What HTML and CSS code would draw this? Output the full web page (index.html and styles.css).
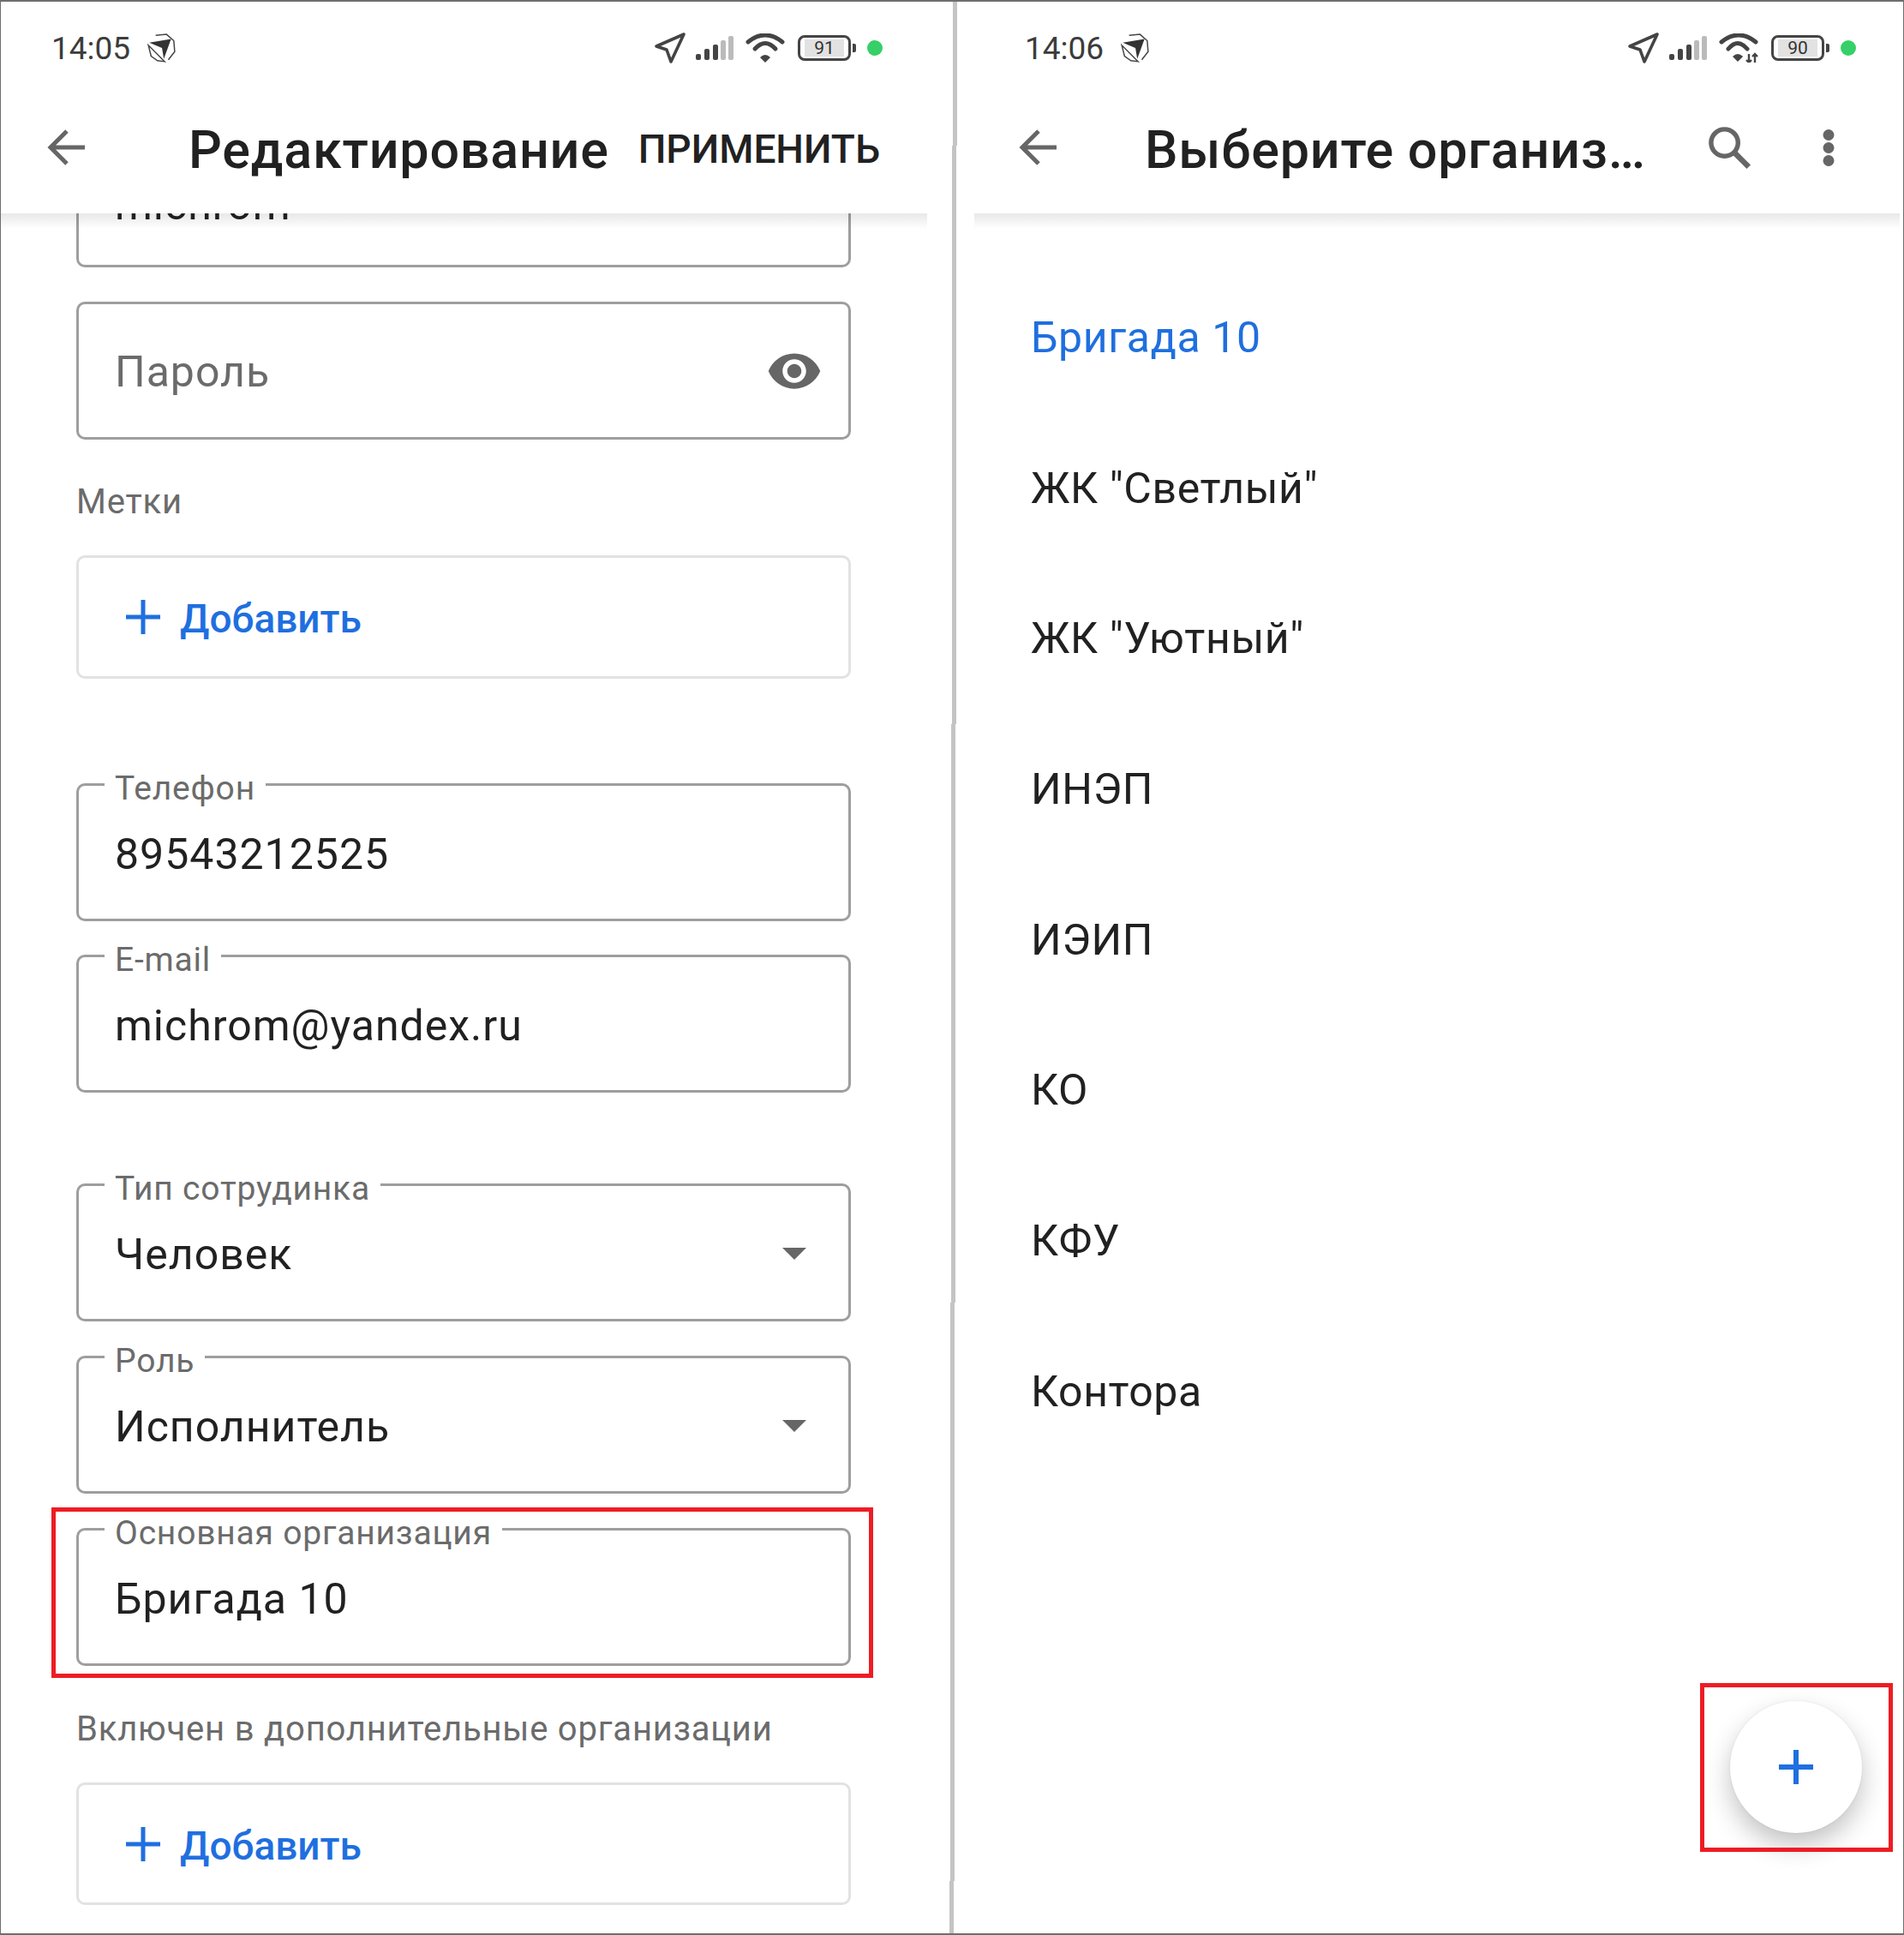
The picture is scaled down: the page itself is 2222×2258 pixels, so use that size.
FILE: index.html
```html
<!DOCTYPE html>
<html lang="en">
<head>
<title>Редактирование</title>
<meta charset="UTF-8">
<link rel="stylesheet" href="styles.css">
</head>
<body>

<div class="frame">

  <!-- Left phone: edit form -->
  <div class="phone phone-left">
    <div class="topbar">
      <div class="status">
        <span class="time">14:05</span>
        <svg class="logo" viewBox="0 0 34 34"><path d="M11 3 L23 2 L31 9 L32 21 L25 30 M21 32 L13 31 L6 26 L3 14 Z" fill="none" stroke="#444" stroke-width="1.4"/><path d="M4 11 L28 7 L20 29 L18 17 Z" fill="#333"/></svg>
        <span class="status-right">
          <svg class="ic-nav" viewBox="0 0 38 38"><path d="M35 3 L3 17 L15 21 L20 35 Z" fill="none" stroke="#444" stroke-width="3.6" stroke-linejoin="round"/></svg>
          <svg class="ic-signal" viewBox="0 0 46 30"><rect x="1" y="22" width="6" height="7" rx="2" fill="#444"/><rect x="11" y="16" width="6" height="13" rx="2" fill="#444"/><rect x="21" y="11" width="6" height="18" rx="2" fill="#444"/><rect x="30" y="6" width="6" height="23" rx="2" fill="#bbb"/><rect x="39" y="1" width="6" height="28" rx="2" fill="#bbb"/></svg>
          <svg class="ic-wifi" viewBox="0 0 46 34"><path d="M3 10 Q23 -6 43 10" fill="none" stroke="#444" stroke-width="5" stroke-linecap="round"/><path d="M11 18 Q23 5 35 18" fill="none" stroke="#444" stroke-width="5" stroke-linecap="round"/><path d="M17 28 L23 34 L29 28 Q23 22 17 28 Z" fill="#444"/></svg>
          <span class="battery"><span class="battery-num">91</span></span>
          <span class="battery-tip"></span>
          <span class="dot"></span>
        </span>
      </div>
      <div class="toolbar">
        <svg class="ic-back" viewBox="0 0 46 46"><path d="M44 23 H5 M23 4 L4 23 L23 42" fill="none" stroke="#666" stroke-width="5"/></svg>
        <span class="title">Редактирование</span>
        <span class="apply">ПРИМЕНИТЬ</span>
      </div>
    </div>

    <div class="form">
      <div class="field field-clipped"><span class="value">michrom</span></div>

      <div class="field field-pass">
        <span class="value placeholder">Пароль</span>
        <svg class="ic-eye" viewBox="0 0 24 24"><path fill="#666" d="M12 4.5C7 4.5 2.73 7.61 1 12c1.73 4.39 6 7.5 11 7.5s9.27-3.11 11-7.5c-1.73-4.39-6-7.5-11-7.5zM12 17c-2.76 0-5-2.24-5-5s2.24-5 5-5 5 2.24 5 5-2.24 5-5 5zm0-8c-1.66 0-3 1.34-3 3s1.34 3 3 3 3-1.34 3-3-1.34-3-3-3z"/></svg>
      </div>

      <div class="caption caption-tags">Метки</div>
      <div class="add-box">
        <svg class="ic-plus" viewBox="0 0 40 40"><path d="M20 0 V40 M0 20 H40" stroke="#1f6fdf" stroke-width="5"/></svg>
        <span class="add-text">Добавить</span>
      </div>

      <div class="field field-phone">
        <span class="legend">Телефон</span>
        <span class="value">89543212525</span>
      </div>
      <div class="field field-email">
        <span class="legend">E-mail</span>
        <span class="value">michrom@yandex.ru</span>
      </div>

      <div class="field field-type">
        <span class="legend">Тип сотрудинка</span>
        <span class="value">Человек</span>
        <span class="arrow"></span>
      </div>
      <div class="field field-next">
        <span class="legend">Роль</span>
        <span class="value">Исполнитель</span>
        <span class="arrow"></span>
      </div>
      <div class="field field-next">
        <span class="legend">Основная организация</span>
        <span class="value">Бригада 10</span>
      </div>

      <div class="caption caption-extra">Включен в дополнительные организации</div>
      <div class="add-box add-box-extra">
        <svg class="ic-plus" viewBox="0 0 40 40"><path d="M20 0 V40 M0 20 H40" stroke="#1f6fdf" stroke-width="5"/></svg>
        <span class="add-text">Добавить</span>
      </div>
    </div>

    <div class="mark mark-org"></div>
  </div>

  <!-- The seam between the two pictures is not quite straight -->
  <div class="divider">
    <div class="seam seam-1"></div>
    <div class="seam seam-2"></div>
    <div class="seam seam-3"></div>
    <div class="seam seam-4"></div>
    <div class="seam seam-5"></div>
  </div>

  <!-- Right phone: organisation list -->
  <div class="phone phone-right">
    <div class="topbar">
      <div class="status">
        <span class="time">14:06</span>
        <svg class="logo" viewBox="0 0 34 34"><path d="M11 3 L23 2 L31 9 L32 21 L25 30 M21 32 L13 31 L6 26 L3 14 Z" fill="none" stroke="#444" stroke-width="1.4"/><path d="M4 11 L28 7 L20 29 L18 17 Z" fill="#333"/></svg>
        <span class="status-right">
          <svg class="ic-nav" viewBox="0 0 38 38"><path d="M35 3 L3 17 L15 21 L20 35 Z" fill="none" stroke="#444" stroke-width="3.6" stroke-linejoin="round"/></svg>
          <svg class="ic-signal" viewBox="0 0 46 30"><rect x="1" y="22" width="6" height="7" rx="2" fill="#444"/><rect x="11" y="16" width="6" height="13" rx="2" fill="#444"/><rect x="21" y="11" width="6" height="18" rx="2" fill="#444"/><rect x="30" y="6" width="6" height="23" rx="2" fill="#bbb"/><rect x="39" y="1" width="6" height="28" rx="2" fill="#bbb"/></svg>
          <svg class="ic-wifi" viewBox="0 0 46 34"><path d="M3 10 Q23 -6 43 10" fill="none" stroke="#444" stroke-width="5" stroke-linecap="round"/><path d="M11 18 Q22 5 33 18" fill="none" stroke="#444" stroke-width="5" stroke-linecap="round"/><path d="M16 27 L22 33 L28 27 Q22 21 16 27 Z" fill="#444"/><path d="M35 24 V34 M32 31 L35 34 L38 31 M42 34 V24 M39 27 L42 24 L45 27" fill="none" stroke="#444" stroke-width="2.4"/></svg>
          <span class="battery"><span class="battery-num">90</span></span>
          <span class="battery-tip"></span>
          <span class="dot"></span>
        </span>
      </div>
      <div class="toolbar">
        <svg class="ic-back" viewBox="0 0 46 46"><path d="M44 23 H5 M23 4 L4 23 L23 42" fill="none" stroke="#666" stroke-width="5"/></svg>
        <span class="title">Выберите организ…</span>
        <svg class="ic-search" viewBox="0 0 48 48"><circle cx="19" cy="19" r="14.5" fill="none" stroke="#666" stroke-width="5"/><path d="M29 29 L45 45" stroke="#666" stroke-width="6"/></svg>
        <svg class="ic-more" viewBox="0 0 14 43"><circle cx="7" cy="6.5" r="6.5" fill="#666"/><circle cx="7" cy="21.5" r="6.5" fill="#666"/><circle cx="7" cy="36.5" r="6.5" fill="#666"/></svg>
      </div>
    </div>

    <div class="orgs">
      <div class="org org-active">Бригада 10</div>
      <div class="org">ЖК "Светлый"</div>
      <div class="org">ЖК "Уютный"</div>
      <div class="org">ИНЭП</div>
      <div class="org">ИЭИП</div>
      <div class="org">КО</div>
      <div class="org">КФУ</div>
      <div class="org">Контора</div>
    </div>

    <div class="fab">
      <svg viewBox="0 0 40 40"><path d="M20 0 V40 M0 20 H40" stroke="#1f6fdf" stroke-width="6"/></svg>
    </div>
    <div class="mark mark-fab"></div>
  </div>

</div>

</body>
</html>
```

FILE: styles.css
```css
* {
  box-sizing: border-box;
}

body {
  margin: 0;
  font-family: 'Roboto', sans-serif;
  color: #212121;
  background-color: white;
}

/* Outer frame of the picture */
.frame {
  display: flex;
  width: 2222px;
  height: 2258px;
  border: 2px solid #6e6e6e;
  border-right-width: 1px;
  border-left-width: 1px;
  overflow: hidden;
}

.phone {
  position: relative;
  height: 100%;
  overflow: hidden;
}

.phone-left {
  flex: 0 0 1107px;
}

.phone-right {
  flex: 1;
  padding: 0 4px 0 20px;
}

/* Seam between the phones */
.divider {
  display: flex;
  flex-direction: column;
  flex: 0 0 9px;
}

.seam {
  width: 5px;
  height: 675px;
  background-color: #c4c4c4;
}

.seam-1 {
  height: 168px;
  margin-left: 4px;
}

.seam-2 {
  margin-left: 3px;
}

.seam-3 {
  margin-left: 2px;
}

.seam-4 {
  margin-left: 1px;
}

.seam-5 {
  flex: 1;
}

/* Status bar and toolbar */
.topbar {
  position: relative;
  z-index: 2;
  height: 247px;
  background-color: white;
}

/* Soft shadow below the bar only */
.topbar::after {
  content: "";
  position: absolute;
  top: 100%;
  left: 0;
  right: 0;
  height: 18px;
  background: linear-gradient(rgba(0, 0, 0, 0.09), rgba(0, 0, 0, 0));
}

.phone-left .topbar {
  margin-right: 26px;
}

.status {
  display: flex;
  align-items: center;
  height: 108px;
  padding-left: 59px;
  padding-right: 52px;
  color: #3c3c3c;
}

.phone-right .status {
  padding-right: 51px;
}

.time {
  font-size: 37px;
}

.logo {
  width: 36px;
  height: 36px;
  margin-left: 18px;
}

.status-right {
  display: flex;
  align-items: center;
  margin-left: auto;
}

.ic-nav {
  width: 38px;
  height: 38px;
}

.ic-signal {
  width: 46px;
  height: 30px;
  margin-left: 10px;
}

.ic-wifi {
  width: 46px;
  height: 34px;
  margin-left: 13px;
}

.battery {
  display: flex;
  align-items: center;
  justify-content: center;
  width: 62px;
  height: 30px;
  margin-left: 15px;
  border: 3px solid #444;
  border-radius: 8px;
}

.battery-num {
  width: 46px;
  height: 20px;
  background-color: #e2e2e2;
  font-size: 21px;
  line-height: 20px;
  text-align: center;
  color: #333;
}

.battery-tip {
  width: 4px;
  height: 10px;
  margin-left: 2px;
  border-radius: 0 2px 2px 0;
  background-color: #444;
}

.dot {
  width: 18px;
  height: 18px;
  margin-left: 13px;
  border-radius: 50%;
  background-color: #36cf68;
}

.toolbar {
  display: flex;
  align-items: center;
  height: 124px;
  padding-left: 54px;
  padding-right: 55px;
}

.phone-right .toolbar {
  padding-left: 52px;
  padding-right: 76px;
}

.ic-back {
  width: 46px;
  height: 46px;
  flex: none;
}

.title {
  margin-left: 119px;
  margin-top: 6px;
  font-size: 61px;
  font-weight: 500;
  letter-spacing: 0.8px;
  white-space: nowrap;
}

.phone-right .title {
  margin-left: 101px;
}

.apply {
  margin-left: auto;
  margin-top: 4px;
  font-size: 46px;
  font-weight: 500;
  white-space: nowrap;
}

.ic-search {
  width: 52px;
  height: 52px;
  margin-left: auto;
}

.ic-more {
  width: 14px;
  height: 43px;
  margin-left: 83px;
}

/* Form */
.form {
  position: absolute;
  top: 0;
  left: 88px;
  width: 904px;
}

.field {
  position: relative;
  display: flex;
  align-items: center;
  height: 161px;
  padding-left: 42px;
  border: 3px solid #9e9e9e;
  border-radius: 10px;
}

.field-clipped {
  height: 160px;
  margin-top: 150px;
  align-items: flex-start;
}

.field-pass {
  margin-top: 40px;
}

.field-phone {
  margin-top: 122px;
}

.field-email {
  margin-top: 39px;
}

.field-next {
  margin-top: 40px;
}

.field-type {
  margin-top: 106px;
}

.value {
  margin-top: 5px;
  font-size: 50px;
  letter-spacing: 1px;
}

.field-clipped .value {
  margin-top: 55px;
}

.placeholder {
  margin-top: 2px;
  color: #6b6b6b;
}

/* Label that sits in a gap of the border */
.legend {
  position: absolute;
  top: -19px;
  left: 30px;
  padding: 0 12px;
  background-color: white;
  font-size: 39px;
  line-height: 44px;
  letter-spacing: 0.8px;
  color: #6b6b6b;
}

.ic-eye {
  width: 66px;
  height: 66px;
  margin-left: auto;
  margin-right: 30px;
}

.arrow {
  margin-left: auto;
  margin-right: 49px;
  margin-top: 2px;
  border-left: 14px solid transparent;
  border-right: 14px solid transparent;
  border-top: 14px solid #666;
}

.caption {
  font-size: 40px;
  line-height: 44px;
  letter-spacing: 0.8px;
  color: #6b6b6b;
}

.caption-tags {
  margin-top: 51px;
}

.caption-extra {
  margin-top: 52px;
}

.add-box {
  display: flex;
  align-items: center;
  height: 144px;
  margin-top: 40px;
  padding-left: 55px;
  border: 3px solid #e2e2e2;
  border-radius: 10px;
}

.add-box-extra {
  height: 143px;
}

.ic-plus {
  width: 40px;
  height: 40px;
}

.add-text {
  margin-left: 23px;
  margin-top: 4px;
  font-size: 46px;
  font-weight: 500;
  color: #1f6fdf;
}

/* Organisation list */
.orgs {
  padding-left: 66px;
  padding-top: 58px;
}

.org {
  height: 175.7px;
  font-size: 50px;
  line-height: 175.7px;
  letter-spacing: 0.6px;
}

.org-active {
  color: #1f6fdf;
}

.fab {
  position: absolute;
  top: 1983px;
  left: 902px;
  display: flex;
  align-items: center;
  justify-content: center;
  width: 154px;
  height: 154px;
  border-radius: 50%;
  background-color: white;
  box-shadow: 0 14px 30px rgba(0, 0, 0, 0.24), 0 0 3px rgba(0, 0, 0, 0.07);
}

.fab svg {
  width: 40px;
  height: 40px;
}

/* Red highlight boxes */
.mark {
  position: absolute;
  z-index: 3;
  border: 5px solid #ed1c24;
}

.mark-org {
  top: 1757px;
  left: 59px;
  width: 959px;
  height: 199px;
}

.mark-fab {
  top: 1962px;
  left: 867px;
  width: 225px;
  height: 197px;
}
```
